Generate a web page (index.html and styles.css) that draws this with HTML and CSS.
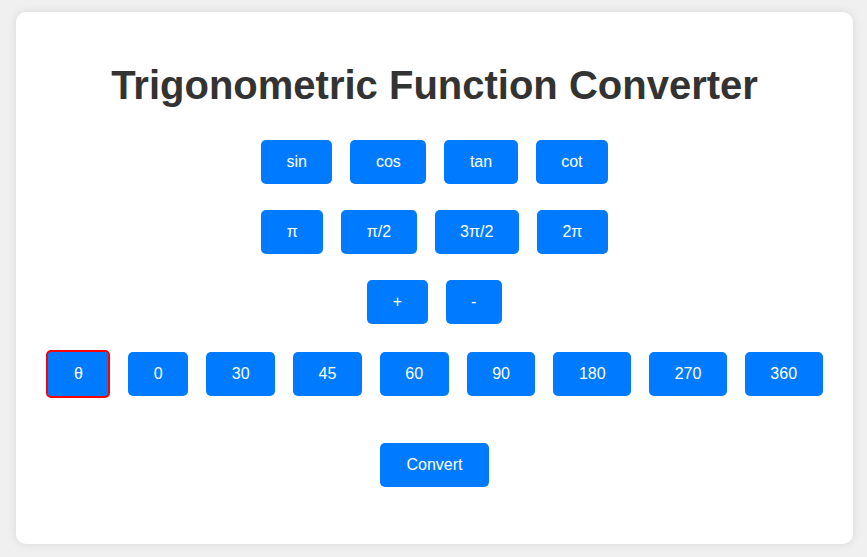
FILE: index.html
```html
<!DOCTYPE html>
<html lang="en">
<head>
<meta charset="UTF-8">
<title>Trigonometric Function Converter</title>
<link rel="stylesheet" href="styles.css">
</head>
<body>
<div class="card">
  <h1 class="title">Trigonometric Function Converter</h1>
  <div class="row row-first">
    <button class="btn">sin</button>
    <button class="btn">cos</button>
    <button class="btn">tan</button>
    <button class="btn">cot</button>
  </div>
  <div class="row">
    <button class="btn">π</button>
    <button class="btn">π/2</button>
    <button class="btn">3π/2</button>
    <button class="btn">2π</button>
  </div>
  <div class="row">
    <button class="btn">+</button>
    <button class="btn">-</button>
  </div>
  <div class="row">
    <button class="btn btn-selected">θ</button>
    <button class="btn">0</button>
    <button class="btn">30</button>
    <button class="btn">45</button>
    <button class="btn">60</button>
    <button class="btn">90</button>
    <button class="btn">180</button>
    <button class="btn">270</button>
    <button class="btn">360</button>
  </div>
  <div class="row row-convert">
    <button class="btn btn-convert">Convert</button>
  </div>
</div>
</body>
</html>
```
FILE: styles.css
```css
html, body {
  margin: 0;
  padding: 0;
}
body {
  background: #f0f0f0;
  font-family: "Liberation Sans", Arial, sans-serif;
  padding: 12px 0 0 16px;
  height: 557px;
  box-sizing: border-box;
}
.card {
  width: 837px;
  box-sizing: border-box;
  background: #ffffff;
  border-radius: 10px;
  box-shadow: 0 0 10px rgba(0, 0, 0, 0.1);
  padding: 50px 0 57px;
  display: flex;
  flex-direction: column;
}
.title {
  margin: 0;
  font-size: 40px;
  line-height: 46px;
  font-weight: bold;
  color: #333333;
  text-align: center;
}
.row {
  display: flex;
  justify-content: center;
  align-items: center;
  gap: 18px;
  margin-top: 26px;
}
.row-first {
  margin-top: 32px;
}
.row-convert {
  margin-top: 45px;
}
.btn {
  font-family: "Liberation Sans", Arial, sans-serif;
  font-size: 16px;
  line-height: 18px;
  padding: 13px 25.5px;
  border: none;
  border-radius: 5px;
  background: #007bff;
  color: #ffffff;
  cursor: pointer;
}
.btn-selected {
  border: 2px solid #ff0000;
}
.btn-convert {
  padding: 13px 26px;
}
```
